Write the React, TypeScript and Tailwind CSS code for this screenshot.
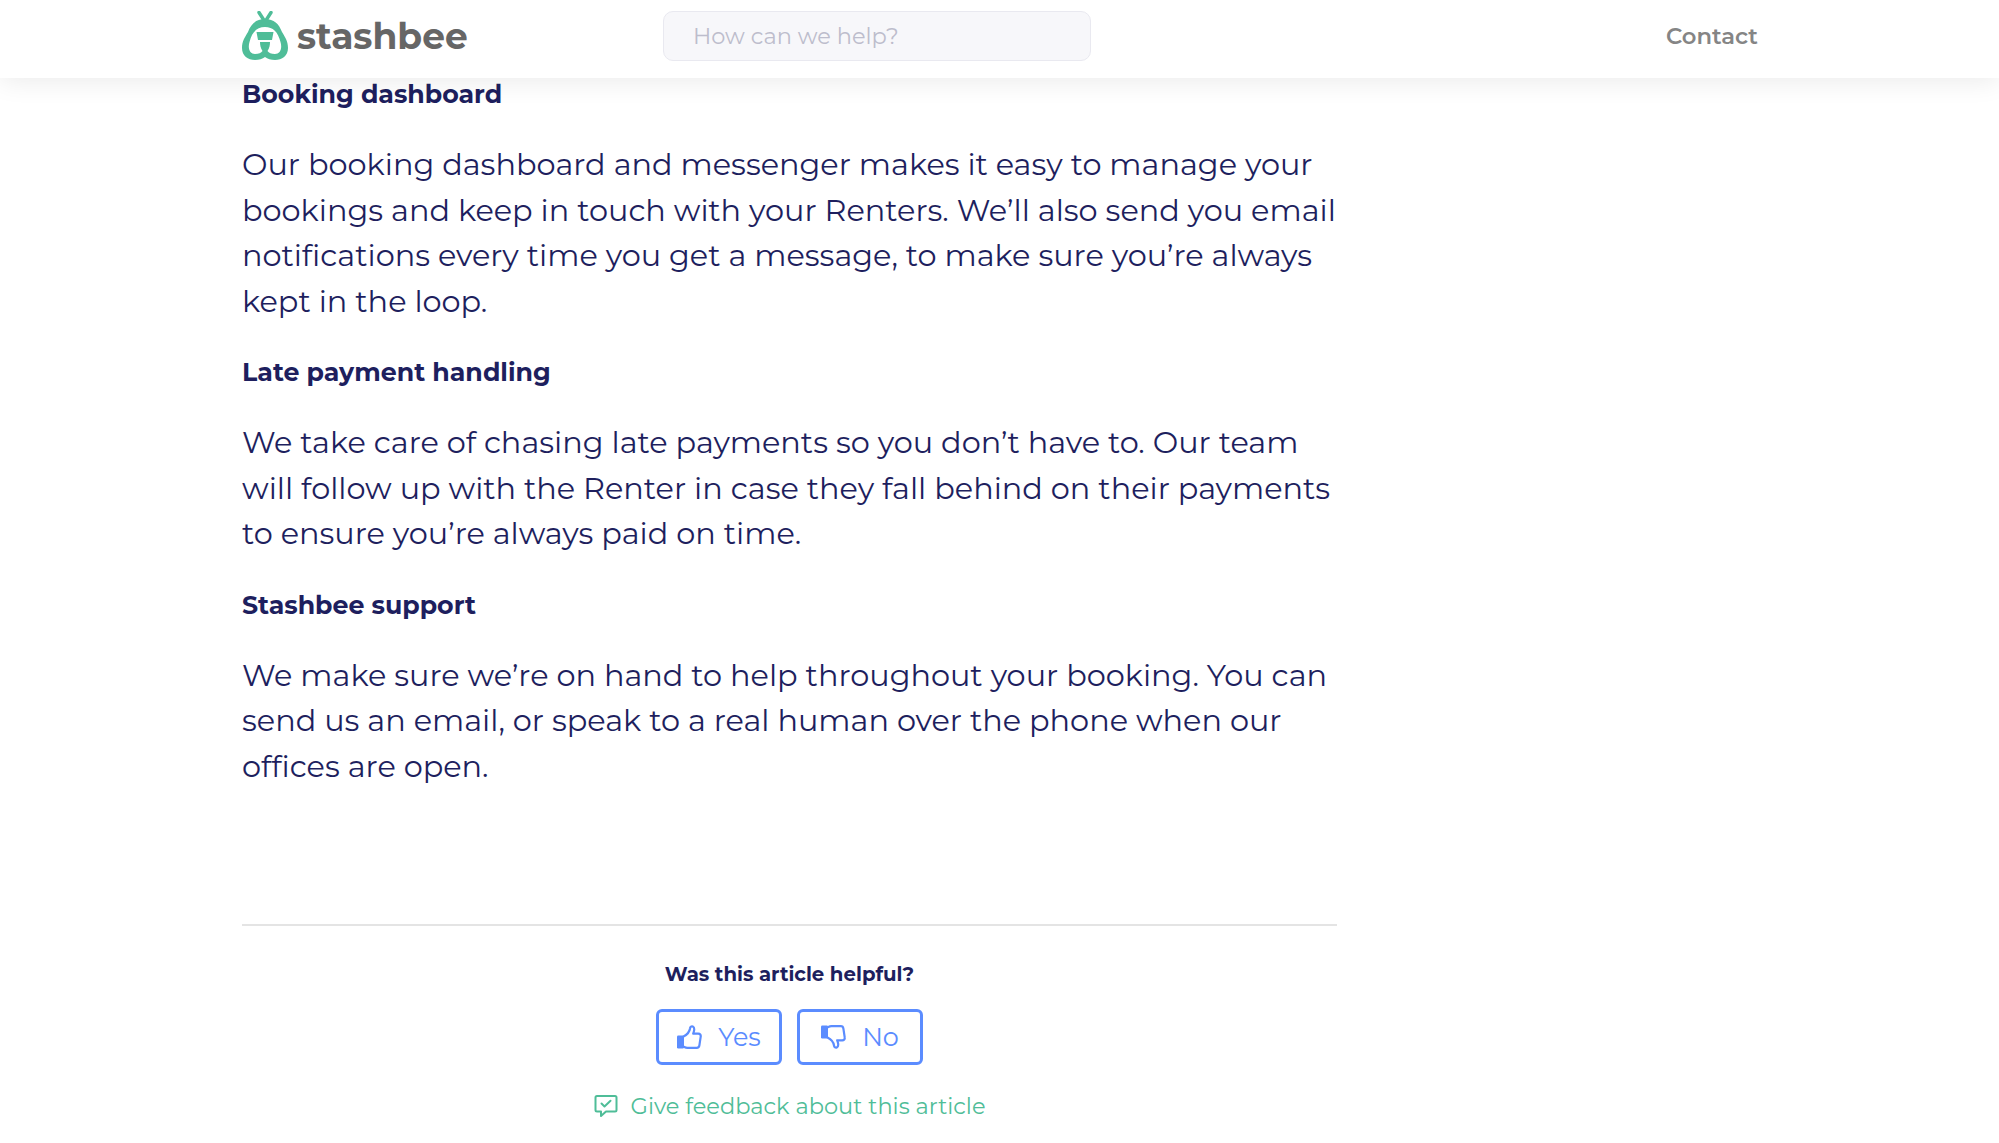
import React from "react";

function Logo() {
  return (
    <svg width="46" height="50" viewBox="0 0 46 50" className="shrink-0">
      <path d="M17 1.5 L21.5 8.5 M29 1.5 L24.5 8.5" stroke="#4fbd98" strokeWidth="3.4" strokeLinecap="round" fill="none" />
      <path fillRule="evenodd" fill="#4fbd98" d="M23 8 C32 8 37 13 40 21 C43 26 46 30 46 37 C46 45 40 49 33 49 C29 49 25.5 48 23 46 C20.5 48 17 49 13 49 C6 49 0 45 0 37 C0 30 3 26 6 21 C9 13 14 8 23 8 Z M23 16 C15 16 10 21 7.5 31 C5.5 38 8 43 13 43 C17 43 19 42 20.5 40 C18.5 37 18 34 18 31 L28 31 C28 34 27.5 37 25.5 40 C27 42 29 43 33 43 C38 43 40.5 38 38.5 31 C36 21 31 16 23 16 Z" />
      <path fill="#4fbd98" d="M14.5 21 H31.5 L30 29 H16 Z" />
    </svg>
  );
}

function ThumbUp({ flip = false }: { flip?: boolean }) {
  return (
    <svg width="25" height="24" viewBox="0 0 25 24" fill="none" className={flip ? "-scale-y-100" : ""}>
      <rect x="0" y="10.5" width="7" height="13" rx="1.2" fill="#5b8cff" />
      <path d="M6.5 11.5 C9.5 10 12.5 7 13 3.5 C13.2 1.8 14.5 1 15.8 1.6 C17.5 2.4 17.6 5 16.2 8.6 H21.3 C23 8.6 24 10 23.7 11.6 L22.4 20.4 C22.2 21.8 21.2 22.8 19.8 22.8 H10.5 C9 22.8 7.8 22.2 6.5 21.6" stroke="#5b8cff" strokeWidth="2.2" strokeLinejoin="round" strokeLinecap="round" />
    </svg>
  );
}

function P({ children }: { children: React.ReactNode }) {
  return <p className="text-[30.35px] leading-[45.5px] text-[#1e1f5e]">{children}</p>;
}
function H({ children }: { children: React.ReactNode }) {
  return <h3 className="text-[25.25px] leading-[32px] font-bold text-[#1e1f5e]">{children}</h3>;
}

export default function App() {
  return (
    <div className="w-[1999px] h-[1143px] overflow-hidden bg-white font-['Montserrat','Inter','Liberation_Sans',sans-serif] relative">
      <header className="h-[78px] bg-white shadow-[0_4px_24px_rgba(0,0,0,0.08)] flex items-center pb-[6px] pl-[242px] pr-[241px] relative z-10">
        <div className="flex items-center w-[421px] gap-[9px]">
          <Logo />
          <span className="text-[36px] font-bold text-[#666666] leading-none">stashbee</span>
        </div>
        <div className="w-[428px] h-[50px] bg-[#f7f7fa] border border-[#e9e9f0] rounded-[10px] flex items-center pl-[29px] pt-[1px] text-[22.5px] text-[#bdbdcc]">How can we help?</div>
        <div className="flex-1" />
        <span className="text-[22.7px] font-semibold text-[#858585]">Contact</span>
      </header>
      <main className="w-[1095px] ml-[242px]">
        <div className="flex flex-col gap-[32px]">
          <H>Booking dashboard</H>
          <P>Our booking dashboard and messenger makes it easy to manage your bookings and keep in touch with your Renters. We’ll also send you email notifications every time you get a message, to make sure you’re always kept in the loop.</P>
          <H>Late payment handling</H>
          <P>We take care of chasing late payments so you don’t have to. Our team will follow up with the Renter in case they fall behind on their payments to ensure you’re always paid on time.</P>
          <H>Stashbee support</H>
          <P>We make sure we’re on hand to help throughout your booking. You can send us an email, or speak to a real human over the phone when our offices are open.</P>
        </div>
        <hr className="mt-[135px] border-0 border-t-2 border-[#e4e4e4]" />
        <div className="flex flex-col items-center">
          <p className="mt-[35px] text-[19.7px] leading-[26px] font-bold text-[#1e1f5e]">Was this article helpful?</p>
          <div className="flex gap-[15px] mt-[22px]">
            <button className="w-[126px] h-[56px] border-[3px] border-[#5b8cff] rounded-[6px] flex items-center justify-center gap-[16px] text-[25.5px] text-[#5b8cff]">
              <ThumbUp />
              Yes
            </button>
            <button className="w-[126px] h-[56px] border-[3px] border-[#5b8cff] rounded-[6px] flex items-center justify-center gap-[16px] text-[25.5px] text-[#5b8cff]">
              <ThumbUp flip />
              No
            </button>
          </div>
          <div className="flex items-center gap-[13px] mt-[26px] text-[22.5px] leading-[30px] text-[#4fbd98]">
            <svg width="24" height="24" viewBox="0 0 24 24" fill="none" stroke="#4fbd98" strokeWidth="2" strokeLinejoin="round" strokeLinecap="round">
              <path d="M3 2 H21 A1.5 1.5 0 0 1 22.5 3.5 V16 A1.5 1.5 0 0 1 21 17.5 H12 L7 22 V17.5 H3 A1.5 1.5 0 0 1 1.5 16 V3.5 A1.5 1.5 0 0 1 3 2 Z" />
              <path d="M7.5 9.5 L10.5 12.5 L16.5 6.8" />
            </svg>
            Give feedback about this article
          </div>
        </div>
      </main>
    </div>
  );
}
